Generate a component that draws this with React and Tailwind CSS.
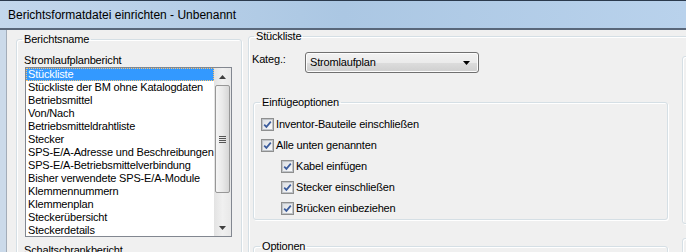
import React from "react";

const items = [
  "Stückliste",
  "Stückliste der BM ohne Katalogdaten",
  "Betriebsmittel",
  "Von/Nach",
  "Betriebsmitteldrahtliste",
  "Stecker",
  "SPS-E/A-Adresse und Beschreibungen",
  "SPS-E/A-Betriebsmittelverbindung",
  "Bisher verwendete SPS-E/A-Module",
  "Klemmennummern",
  "Klemmenplan",
  "Steckerübersicht",
  "Steckerdetails",
];

function Check({ label }) {
  return (
    <div className="flex h-[21px] items-center">
      <div className="flex h-[13px] w-[13px] items-center justify-center border border-[#8e8f8f] bg-white">
        <div className="flex h-[11px] w-[11px] items-center justify-center border border-[#c0c4c9] bg-gradient-to-br from-[#dcdfe3] to-[#fbfbfb]">
          <svg width="9" height="9" viewBox="0 0 9 9">
            <path d="M1.2 4.6 L3.4 6.9 L7.8 1.6" fill="none" stroke="#3b5c9c" strokeWidth="1.7" />
          </svg>
        </div>
      </div>
      <span className="ml-[2px] text-[11px] leading-[13px] tracking-[-0.17px]">{label}</span>
    </div>
  );
}

const fs = "rounded-[3px] border border-[#d5dfe5] shadow-[1px_1px_0_#ffffff,inset_1px_1px_0_#ffffff]";
const t11 = "text-[11px] leading-[13px] tracking-[-0.17px]";

export default function App() {
  return (
    <div
      className="relative flex h-[252px] w-[686px] flex-col overflow-hidden bg-[#f0f0f0] text-black"
      style={{ fontFamily: '"Liberation Sans", Arial, sans-serif' }}
    >
      {/* title bar */}
      <div className="flex h-[30px] shrink-0 items-center border-t border-b-2 border-t-[#2b3a4d] border-b-[#59677a] bg-gradient-to-r from-[#c3d7ec] via-[#abc7e3] to-[#b9d2ec] pl-[8px]">
        <span className="text-[12px] leading-[14px] text-black">
          Berichtsformatdatei einrichten - Unbenannt
        </span>
      </div>
      <div className="flex min-h-0 flex-1">
        <div className="w-[6px] shrink-0 bg-[#cbdaea]" />
        <div className="w-[1px] shrink-0 bg-[#a3adb9]" />
        <div className="flex min-w-0 flex-1 bg-[#f0f0f0]">
          {/* left panel */}
          <div className="shrink-0 pl-[9px] pt-[3px]">
            <fieldset className={`h-[260px] w-[226px] ${fs}`}>
              <legend className={`ml-[5px] px-[2px] ${t11}`}>Berichtsname</legend>
              <div className={`pl-[7px] pt-[8px] ${t11}`}>Stromlaufplanbericht</div>
              <div className="ml-[8px] flex h-[170px] w-[207px] border border-[#828790] bg-white">
                <div className="min-w-0 flex-1 overflow-hidden">
                  {items.map((t, i) => (
                    <div
                      key={t}
                      className={
                        i === 0
                          ? `h-[13px] whitespace-nowrap bg-[#3399ff] pl-[2px] text-white outline-1 -outline-offset-1 outline-dotted outline-[#ffc36b] ${t11}`
                          : `h-[13px] whitespace-nowrap pl-[2px] ${t11}`
                      }
                    >
                      {t}
                    </div>
                  ))}
                </div>
                {/* scrollbar */}
                <div className="flex w-[17px] shrink-0 flex-col bg-gradient-to-r from-[#e3e3e3] via-[#f0f0f0] to-[#e8e8e8]">
                  <div className="flex h-[17px] items-center justify-center">
                    <svg width="7" height="4" viewBox="0 0 7 4">
                      <path d="M0 4 L3.5 0 L7 4 Z" fill="#404040" />
                    </svg>
                  </div>
                  <div className="mx-[1px] flex h-[108px] items-center justify-center rounded-[2px] border border-[#979797] bg-gradient-to-r from-[#f5f5f5] via-[#e9e9e9] to-[#d6d6d6]">
                    <div className="flex flex-col gap-[1px]">
                      <div className="h-[1px] w-[7px] bg-[#555]" />
                      <div className="h-[1px] w-[7px] bg-[#555]" />
                      <div className="h-[1px] w-[7px] bg-[#555]" />
                      <div className="h-[1px] w-[7px] bg-[#555]" />
                    </div>
                  </div>
                  <div className="flex-1" />
                  <div className="flex h-[17px] items-center justify-center">
                    <svg width="7" height="4" viewBox="0 0 7 4">
                      <path d="M0 0 L7 0 L3.5 4 Z" fill="#404040" />
                    </svg>
                  </div>
                </div>
              </div>
              <div className={`pl-[7px] pt-[7px] ${t11}`}>Schaltschrankbericht</div>
            </fieldset>
          </div>
          {/* right panel */}
          <div className="ml-[6px] shrink-0">
            <fieldset className={`h-[260px] w-[700px] ${fs}`}>
              <legend className={`ml-[5px] px-[2px] ${t11}`}>Stückliste</legend>
              <div className="flex items-start">
                <div className="ml-[4px] w-[415px] shrink-0">
                  <div className="flex items-start pt-[9px]">
                    <span className={`ml-[-1px] mt-[1px] w-[53px] ${t11}`}>Kateg.:</span>
                    <div className="flex h-[21px] w-[174px] items-center justify-between rounded-[3px] border border-[#707070] bg-[linear-gradient(#f2f2f2,#ebebeb_50%,#dddddd_50%,#cfcfcf)] pl-[4px] pr-[8px] shadow-[inset_0_0_0_1px_#fcfcfc]">
                      <span className={t11}>Stromlaufplan</span>
                      <svg width="7" height="4" viewBox="0 0 7 4">
                        <path d="M0 0 L7 0 L3.5 4 Z" fill="#000" />
                      </svg>
                    </div>
                  </div>
                  <fieldset className={`mt-[23px] ${fs}`}>
                    <legend className={`ml-[6px] px-[2px] ${t11}`}>Einfügeoptionen</legend>
                    <div className="pl-[7px] pt-[5px]">
                      <Check label="Inventor-Bauteile einschließen" />
                      <Check label="Alle unten genannten" />
                      <div className="pl-[20px]">
                        <Check label="Kabel einfügen" />
                        <Check label="Stecker einschließen" />
                        <Check label="Brücken einbeziehen" />
                      </div>
                    </div>
                  </fieldset>
                  <fieldset className={`mt-[20px] h-[40px] ${fs}`}>
                    <legend className={`ml-[6px] px-[2px] ${t11}`}>Optionen</legend>
                  </fieldset>
                </div>
                <div className="ml-[14px] w-[200px] shrink-0 pt-[13px]">
                  <div className={`h-[168px] ${fs}`} />
                  <div className={`mt-[14px] h-[40px] ${fs}`} />
                </div>
              </div>
            </fieldset>
          </div>
        </div>
      </div>
    </div>
  );
}
